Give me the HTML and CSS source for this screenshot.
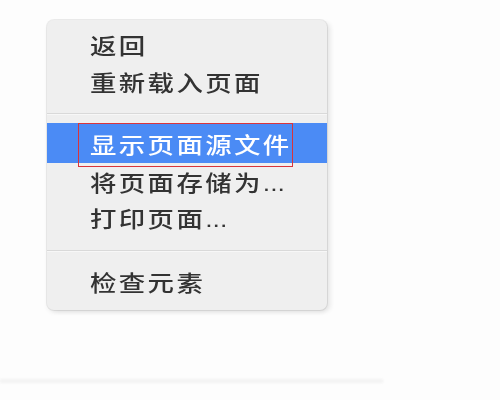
FILE: index.html
```html
<!DOCTYPE html>
<html lang="zh-CN">
<head>
<meta charset="utf-8">
<title>Context menu</title>
<link rel="stylesheet" href="styles.css">
</head>
<body>
<div class="page">
  <div class="menu">
    <div class="item r1"><span class="t">返回</span></div>
    <div class="item r2"><span class="t">重新载入页面</span></div>
    <div class="sep sep1"></div>
    <div class="item hl"><span class="t">显示页面源文件</span><span class="mark"></span></div>
    <div class="item r4"><span class="t">将页面存储为<span class="dots">...</span></span></div>
    <div class="item r5"><span class="t">打印页面<span class="dots">...</span></span></div>
    <div class="sep sep2"></div>
    <div class="item r6"><span class="t">检查元素</span></div>
  </div>
  <div class="floor"></div>
</div>
</body>
</html>
```
FILE: styles.css
```css
html, body {
  margin: 0;
  padding: 0;
  background: #fdfdfd;
}
.page {
  width: 500px;
  height: 400px;
  overflow: hidden;
  padding-top: 20px;
  box-sizing: border-box;
}
.menu {
  margin-left: 47px;
  width: 280px;
  box-sizing: border-box;
  padding: 6px 0 11px;
  background: #efefef;
  border-radius: 7px;
  box-shadow: 0 0 0 1px rgba(0,0,0,0.07), 4px 2px 4px rgba(0,0,0,0.07), 0 3px 4px rgba(0,0,0,0.05);
  font-family: "Noto Sans CJK SC", "Liberation Sans", sans-serif;
  font-size: 22px;
  font-weight: 500;
  color: #333333;
}
.item {
  position: relative;
  height: 37px;
  line-height: 37px;
  padding-left: 43px;
  white-space: nowrap;
}
.t {
  display: inline-block;
  letter-spacing: 2px;
  transform: scaleX(1.2);
  transform-origin: 0 50%;
}
.item.hl {
  height: 40px;
  line-height: 40px;
  background: #4b8bf5;
  color: #ffffff;
}
.item.r4, .item.r5, .item.r6 {
  height: 36px;
  line-height: 36px;
}
.dots {
  font-family: "Liberation Sans", sans-serif;
  letter-spacing: 0;
}
.sep {
  height: 1px;
  background: #d9d9d9;
  border-bottom: 1px solid #f7f7f7;
}
.sep1 {
  margin: 13px 0 8px;
}
.sep2 {
  margin: 15px 0 11px;
}
.mark {
  position: absolute;
  left: 31px;
  top: 0;
  width: 213px;
  height: 42px;
  border: 1px solid #d8343c;
}
.floor {
  margin-top: 69px;
  width: 383px;
  height: 4px;
  background: #f3f3f3;
  filter: blur(1px);
}
```
